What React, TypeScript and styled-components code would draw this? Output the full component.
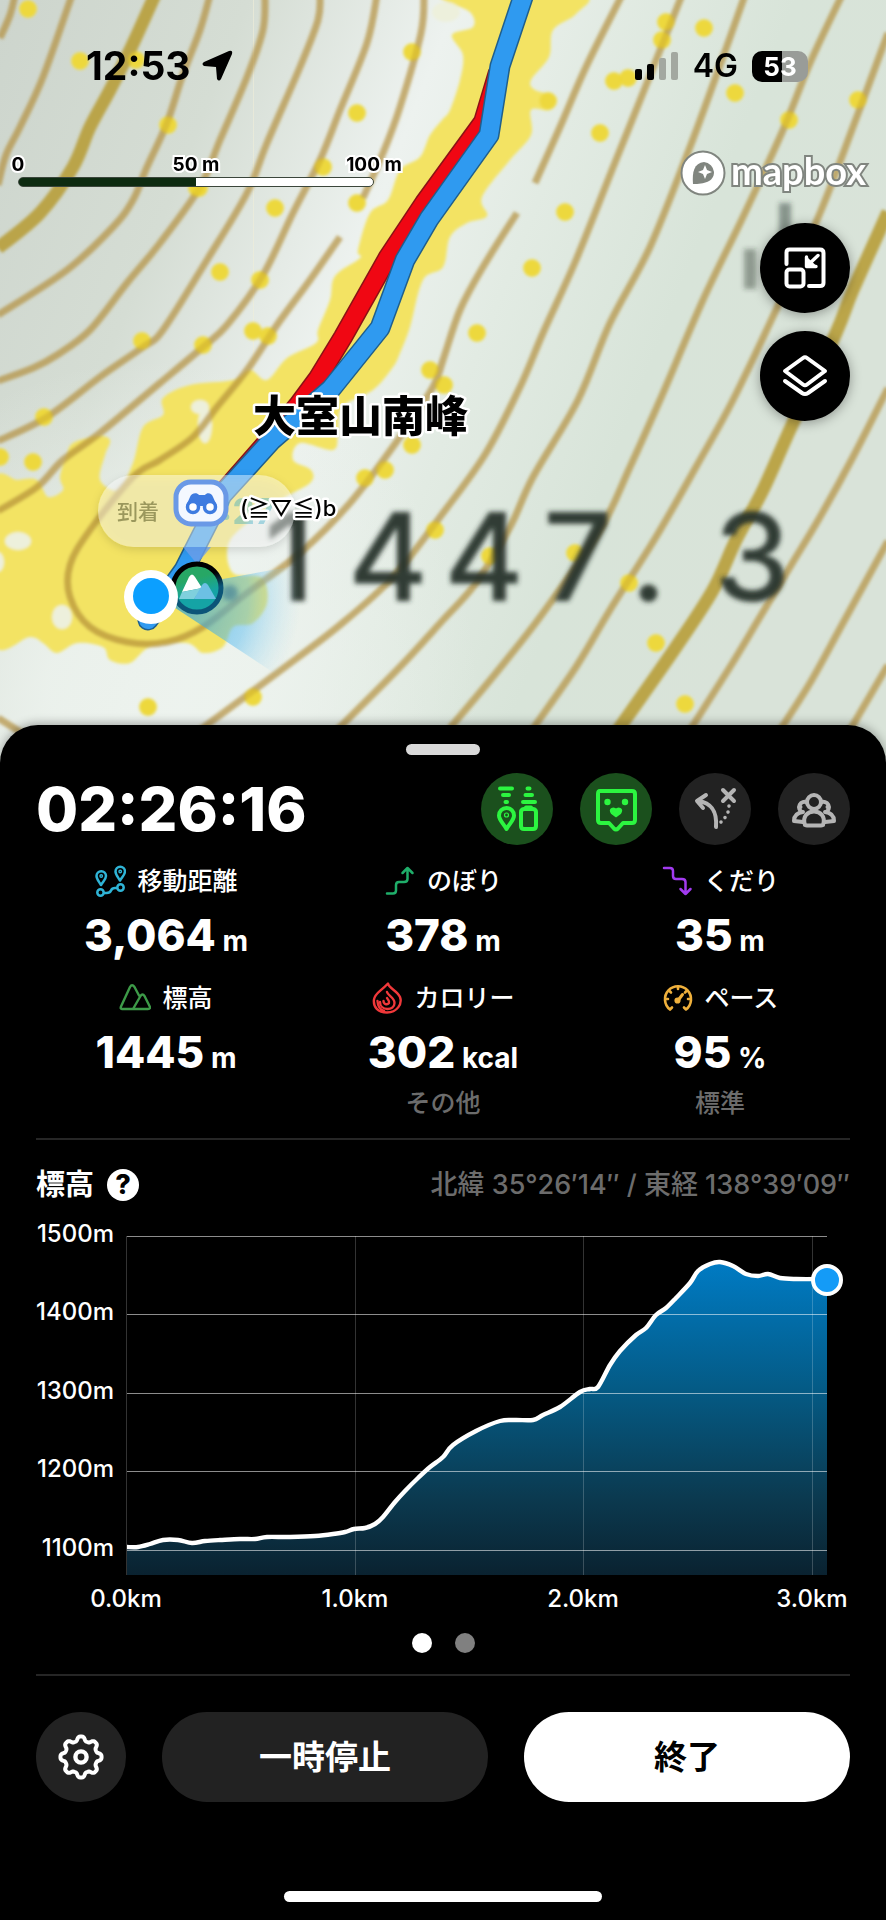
import React from "react";
import styled, { createGlobalStyle } from "styled-components";

const GlobalStyle = createGlobalStyle`
  *, *::before, *::after { box-sizing: border-box; }
  html, body { margin: 0; padding: 0; background: #000; }
  body { font-family: Inter, "Noto Sans CJK JP", sans-serif; color: #fff; }
  button { font: inherit; color: inherit; border: 0; padding: 0; cursor: pointer; }
  dl, dt, dd, h2, p { margin: 0; font: inherit; }
`;

/* ---------- page ---------- */

const Screen = styled.main`
  min-height: 100vh;
  display: flex;
  flex-direction: column;
`;

const MapArea = styled.section`
  position: relative;
  height: 785px;
  margin-bottom: -60px;
  overflow: hidden;
  background: #dfe8df;
  color: #000;
`;

const MapCanvas = styled.svg`
  position: absolute;
  inset: 0;
  width: 100%;
  height: 100%;
  display: block;
`;

const MapOverlay = styled.div`
  position: relative;
`;

const StatusBar = styled.div`
  display: flex;
  justify-content: space-between;
  align-items: center;
  height: 132px;
  padding: 0 78px 0 86px;
`;

const StatusGroup = styled.div<{ $gap: number }>`
  display: flex;
  align-items: center;
  gap: ${(p) => p.$gap}px;
`;

const Clock = styled.span`
  font-size: 39px;
  line-height: 40px;
  font-weight: 700;
`;

const Network = styled.span`
  font-size: 32px;
  line-height: 32px;
  font-weight: 600;
`;

const Battery = styled.span`
  width: 56px;
  height: 31px;
  border-radius: 10px;
  background: linear-gradient(90deg, #000 54%, #999c98 54%);
  color: #fff;
  font-size: 26px;
  line-height: 31px;
  font-weight: 700;
  text-align: center;
`;

const MapTools = styled.div`
  display: flex;
  justify-content: space-between;
  align-items: flex-start;
  padding: 18px 20px 0 18px;
`;

const Scale = styled.div`
  width: 356px;
  padding-top: 4px;
`;

const ScaleLabels = styled.div`
  display: flex;
  justify-content: space-between;
`;

const ScaleLabel = styled.span`
  display: flex;
  justify-content: center;
  width: 0;
  white-space: nowrap;
  font-size: 19px;
  line-height: 22px;
  font-weight: 700;
  -webkit-text-stroke: 4px #fff;
  paint-order: stroke fill;
`;

const ScaleBar = styled.div`
  height: 10px;
  margin-top: 1px;
  border: 1px solid #3b463b;
  border-radius: 5px;
  background: linear-gradient(90deg, #0d2b10 50%, #fff 50%);
`;

const ToolColumn = styled.div`
  display: flex;
  flex-direction: column;
  align-items: flex-end;
  gap: 18px;
`;

const MapboxLogo = styled.a`
  display: flex;
  align-items: center;
  gap: 5px;
  height: 46px;
  margin-bottom: 9px;
  color: #fff;
  text-decoration: none;
`;

const MapboxWord = styled.span`
  font-family: Lato, sans-serif;
  font-size: 38px;
  line-height: 38px;
  padding-bottom: 6px;
  font-weight: 700;
  -webkit-text-stroke: 4px #80857f;
  paint-order: stroke fill;
`;

const MapButton = styled.button`
  width: 90px;
  height: 90px;
  margin-right: 16px;
  border-radius: 50%;
  background: #000;
  box-shadow: 0 2px 12px rgba(0, 0, 0, 0.35);
  color: #fff;
`;

/* ---------- sheet ---------- */

const Sheet = styled.section`
  position: relative;
  flex: 1;
  display: flex;
  flex-direction: column;
  padding: 19px 36px 18px;
  border-radius: 38px 38px 0 0;
  background: #000;
  box-shadow: 0 -2px 10px rgba(0, 0, 0, 0.3);
`;

const Grabber = styled.div`
  align-self: center;
  width: 74px;
  height: 11px;
  border-radius: 6px;
  background: #d9d9d9;
`;

const TimerRow = styled.div`
  display: flex;
  align-items: center;
  justify-content: space-between;
  margin-top: 18px;
`;

const Timer = styled.time`
  font-size: 61px;
  line-height: 72px;
  font-weight: 800;
`;

const Toggles = styled.div`
  display: flex;
  gap: 27px;
`;

const Toggle = styled.button<{ $on?: boolean }>`
  width: 72px;
  height: 72px;
  border-radius: 50%;
  background: ${(p) => (p.$on ? "#1b501d" : "#222")};
  color: ${(p) => (p.$on ? "#2cf540" : "#b5b5b5")};
`;

const Stats = styled.dl`
  display: grid;
  grid-template-columns: repeat(3, 1fr);
  gap: 14px 17px;
  margin-top: 18px;
`;

const Stat = styled.div`
  display: flex;
  flex-direction: column;
  align-items: center;
`;

const StatLabel = styled.dt`
  display: flex;
  align-items: center;
  gap: 11px;
  font-size: 25px;
  line-height: 36px;
  font-weight: 500;
`;

const StatValue = styled.dd`
  margin-top: 11px;
  font-size: 44px;
  line-height: 50px;
  font-weight: 800;
`;

const Unit = styled.span`
  font-size: 28px;
  font-weight: 700;
`;

const StatNote = styled.dd`
  margin-top: 2px;
  font-size: 25px;
  line-height: 36px;
  font-weight: 500;
  color: #6c6c6c;
`;

const Divider = styled.hr`
  width: 100%;
  height: 2px;
  margin: 17px 0 0;
  border: 0;
  background: #262626;
`;

const ElevationHeader = styled.div`
  display: flex;
  align-items: center;
  justify-content: space-between;
  height: 40px;
  margin-top: 25px;
`;

const ElevationTitle = styled.div`
  display: flex;
  align-items: center;
  gap: 13px;
`;

const Title = styled.h2`
  font-size: 29px;
  line-height: 40px;
  font-weight: 700;
`;

const Help = styled.button`
  width: 32px;
  height: 32px;
  border-radius: 50%;
  background: #fff;
  color: #000;
  font-size: 27px;
  line-height: 32px;
  font-weight: 800;
`;

const Coordinates = styled.p`
  font-size: 27px;
  line-height: 40px;
  font-weight: 500;
  color: #6c6c6c;
`;

const Chart = styled.svg`
  display: block;
  width: 100%;
  height: auto;
  overflow: visible;
  margin-top: 13px;
  font-size: 24px;
  font-weight: 500;
`;

const Pager = styled.div`
  display: flex;
  justify-content: center;
  gap: 23px;
  margin: 5px 0 4px;
`;

const PageDot = styled.button<{ $active?: boolean }>`
  width: 20px;
  height: 20px;
  border-radius: 50%;
  background: ${(p) => (p.$active ? "#fff" : "#808080")};
`;

const Actions = styled.div`
  display: flex;
  gap: 36px;
  margin-top: 36px;
`;

const SettingsButton = styled.button`
  flex: none;
  width: 90px;
  height: 90px;
  border-radius: 50%;
  background: #222;
`;

const ActionButton = styled.button<{ $primary?: boolean }>`
  flex: 1;
  height: 90px;
  border-radius: 45px;
  background: ${(p) => (p.$primary ? "#fff" : "#222")};
  color: ${(p) => (p.$primary ? "#000" : "#fff")};
  font-size: 33px;
  line-height: 40px;
  font-weight: 700;
`;

const HomeIndicator = styled.div`
  align-self: center;
  width: 39%;
  height: 11px;
  margin-top: auto;
  border-radius: 6px;
  background: #fff;
`;

const LineIcon = styled.svg`
  display: block;
  fill: none;
  stroke: currentColor;
  stroke-linecap: round;
  stroke-linejoin: round;
`;

/* ---------- map data ---------- */

type Pt = [number, number];

/* Catmull-Rom spline through the points */
function smooth(points: Pt[], close = false): string {
  const n = points.length;
  const at = (i: number): Pt =>
    close ? points[(i + n) % n] : points[Math.max(0, Math.min(n - 1, i))];
  let d = `M${points[0][0]} ${points[0][1]}`;
  const last = close ? n : n - 1;
  for (let i = 0; i < last; i++) {
    const [p0, p1, p2, p3] = [at(i - 1), at(i), at(i + 1), at(i + 2)];
    d += `C${(p1[0] + (p2[0] - p0[0]) / 6).toFixed(1)} ${(p1[1] + (p2[1] - p0[1]) / 6).toFixed(1)} ${(p2[0] - (p3[0] - p1[0]) / 6).toFixed(1)} ${(p2[1] - (p3[1] - p1[1]) / 6).toFixed(1)} ${p2[0]} ${p2[1]}`;
  }
  return close ? d + "Z" : d;
}

const contours: Pt[][] = [
  [[15, -5], [10, 15], [0, 38]],
  [[72, -5], [43, 77], [20, 127], [6, 155], [-2, 185]],
  [[210, -5], [200, 30], [182, 77], [167, 123], [147, 167], [133, 200], [113, 227], [67, 270], [-2, 315]],
  [[265, -5], [263, 30], [247, 77], [220, 140], [200, 187], [160, 243], [127, 283], [90, 330], [57, 355], [33, 368], [-2, 381]],
  [[320, -5], [318, 20], [300, 67], [267, 143], [247, 193], [207, 260], [163, 330], [143, 347], [100, 377], [47, 417], [-2, 441]],
  [[377, -5], [367, 43], [340, 110], [320, 160], [293, 213], [263, 275], [227, 325], [203, 347], [160, 383], [100, 433], [63, 460], [37, 487], [-2, 511]],
  [[424, -5], [421, 33], [400, 107], [383, 153], [363, 198]],
  [[340, 237], [310, 280], [277, 325], [247, 370], [217, 407], [193, 437], [160, 460], [133, 477], [90, 530], [70, 565], [70, 597], [90, 627], [127, 642], [167, 642], [203, 627], [247, 593], [300, 553], [350, 503], [400, 437], [433, 387], [443, 360], [460, 310], [483, 267], [517, 213]],
  [[535, 183], [560, 127], [586, 67], [622, -5]],
  [[682, -5], [643, 93], [616, 160], [576, 260], [543, 333], [520, 387], [486, 453], [443, 513], [393, 577], [340, 625], [277, 673], [200, 730]],
  [[745, -5], [723, 57], [690, 147], [650, 247], [610, 323], [578, 400], [533, 477], [510, 527], [476, 583], [443, 620], [397, 670], [337, 730]],
  [[842, -5], [810, 63], [783, 130], [743, 217], [703, 300], [660, 400], [630, 467], [600, 530], [543, 613], [496, 673], [450, 728]],
  [[888, 33], [853, 127], [820, 213], [776, 310], [733, 400], [696, 467], [656, 537], [610, 610], [576, 667], [532, 730]],
  [[888, 388], [853, 457], [820, 517], [790, 567], [760, 617], [730, 667], [690, 730]],
  [[888, 541], [843, 623], [810, 683], [780, 730]],
  [[888, 665], [850, 730]],
  [[-2, 718], [25, 735]],
];

const indexContours: Pt[][] = [
  [[155, -5], [130, 50], [110, 90], [90, 127], [73, 167], [40, 213], [-2, 248]],
  [[888, 212], [853, 290], [836, 333], [793, 423], [763, 490], [736, 540], [713, 590], [676, 647], [618, 730]],
];

const bareGround: Pt[] = [
  [443, -6], [470, 12], [473, 27], [452, 35], [463, 55], [460, 80], [450, 110], [442, 120], [430, 135], [420, 157], [400, 170], [388, 200],
  [370, 213], [358, 250], [360, 258], [335, 276], [330, 300], [318, 330], [316, 343], [287, 358], [267, 380], [250, 370], [233, 380],
  [190, 385], [163, 398], [163, 415], [143, 427], [133, 463], [118, 490], [100, 480], [105, 455], [110, 440], [98, 436], [73, 443],
  [66, 457], [60, 477], [63, 490], [48, 497], [37, 480], [18, 480], [-8, 487], [-8, 640], [30, 637], [43, 643], [57, 653], [77, 643], [103, 647],
  [110, 660], [130, 663], [150, 647], [187, 643], [203, 653], [223, 647], [233, 627], [253, 623], [267, 603], [262, 578], [233, 573],
  [228, 545], [247, 523], [280, 500], [310, 483], [311, 470], [293, 460], [300, 443], [333, 450], [338, 433], [342, 407], [373, 390],
  [393, 367], [400, 353], [410, 327], [423, 280], [443, 267], [450, 237], [467, 223], [487, 216], [482, 197], [510, 160], [531, 135],
  [531, 110], [550, 110], [556, 97], [535, 90], [531, 80], [549, 57], [553, 30], [576, 14], [580, -6],
];

const clearings: [number, number, number, number][] = [
  [18, 541, 13, 9], [62, 617, 10, 12], [205, 425, 7, 18], [200, 407, 9, 7], [-2, 562, 6, 10], [446, 12, 14, 10],
];

const scrub: Pt[] = [
  [28, 9], [80, 61], [168, 125], [199, 188], [412, 52], [357, 113], [323, 167], [357, 203], [275, 208], [220, 272], [260, 280],
  [142, 341], [203, 345], [253, 331], [268, 336], [44, 417], [666, 22], [662, 40], [704, 28], [614, 81], [628, 78], [735, 93],
  [600, 133], [789, 120], [858, 100], [548, 101], [565, 212], [532, 268], [477, 333], [430, 370], [444, 385], [490, 556], [575, 553],
  [629, 583], [656, 643], [685, 704], [148, 707], [253, 697], [365, 478], [385, 470], [412, 445], [435, 530], [33, 462], [0, 457],
  [197, 188], [340, 352], [136, 60],
];

const plannedRoute = "M498 72L483 122L424 203L388 257L343 337L318 378L298 405L266 443L216 500";
const walkedRoute = "M524-6L500 66L489 135L429 219L405 260L380 328L331 389L272 440L222 495L184 570L148 620";

function MapDrawing() {
  return (
    <MapCanvas viewBox="0 0 886 785" preserveAspectRatio="xMidYMin slice" role="img" aria-label="大室山南峰の地図">
      <defs>
        <linearGradient id="ground" x1="0" y1="0" x2="1" y2="0.35">
          <stop offset="0" stopColor="#cdd5cd" />
          <stop offset="0.25" stopColor="#d5ddd4" />
          <stop offset="0.46" stopColor="#edf2ef" />
          <stop offset="0.62" stopColor="#e2ebe3" />
          <stop offset="0.8" stopColor="#d8e4d9" />
          <stop offset="1" stopColor="#d9e3d9" />
        </linearGradient>
        <radialGradient id="valley" gradientUnits="userSpaceOnUse" cx="150" cy="690" r="330">
          <stop offset="0.3" stopColor="#edf3ee" stopOpacity="0.85" />
          <stop offset="1" stopColor="#edf3ee" stopOpacity="0" />
        </radialGradient>
        <radialGradient id="heading" gradientUnits="userSpaceOnUse" cx="151" cy="597" r="150">
          <stop offset="0.2" stopColor="#1b9be0" stopOpacity="0.65" />
          <stop offset="0.65" stopColor="#5cbdf0" stopOpacity="0.5" />
          <stop offset="1" stopColor="#a9def5" stopOpacity="0" />
        </radialGradient>
        <linearGradient id="peakFill" x1="0" y1="0" x2="0.3" y2="1">
          <stop offset="0.4" stopColor="#27a765" />
          <stop offset="0.75" stopColor="#15a3a5" />
        </linearGradient>
        <linearGradient id="peakRing" x1="0" y1="0" x2="0.3" y2="1">
          <stop offset="0.4" stopColor="#000" />
          <stop offset="0.7" stopColor="#0b5578" />
        </linearGradient>
        <filter id="soft"><feGaussianBlur stdDeviation="1.6" /></filter>
        <filter id="softer"><feGaussianBlur stdDeviation="2.4" /></filter>
        <filter id="pillShadow" x="-20%" y="-30%" width="140%" height="180%">
          <feDropShadow dx="0" dy="3" stdDeviation="4" floodOpacity="0.3" />
        </filter>
      </defs>

      <rect width="886" height="785" fill="url(#ground)" />
      <rect width="886" height="785" fill="url(#valley)" />
      <rect x="253" width="1" height="375" fill="#f0efd8" opacity="0.6" />

      <g filter="url(#soft)">
        <path d={smooth(bareGround, true)} fill="#f3e364" />
        {clearings.map(([cx, cy, rx, ry], i) => (
          <ellipse key={i} cx={cx} cy={cy} rx={rx} ry={ry} fill="#edf0dc" />
        ))}
        {scrub.map(([cx, cy], i) => (
          <circle key={i} cx={cx} cy={cy} r="9" fill="#eedc50" />
        ))}
        <g fill="none" stroke="#b38d36">
          {contours.map((c, i) => (
            <path key={i} d={smooth(c)} strokeWidth="7" opacity="0.68" />
          ))}
          {indexContours.map((c, i) => (
            <path key={i} d={smooth(c)} strokeWidth="13" stroke="#b99f3d" opacity="0.92" />
          ))}
        </g>
        {scrub.map(([cx, cy], i) => (
          <circle key={i} cx={cx} cy={cy} r="8" fill="#ecd52c" opacity="0.55" />
        ))}
      </g>

      <g filter="url(#softer)" fill="#27332b">
        <rect x="779" y="203" width="12" height="40" opacity="0.45" />
        <rect x="744" y="249" width="12" height="40" opacity="0.4" />
        <circle cx="230" cy="593" r="8" opacity="0.6" />
        <text x="264 348 444 543 630 714" y="601" fontSize="122" fontWeight="500" opacity="0.95">1447.3</text>
      </g>

      <g fill="none" strokeLinejoin="round">
        <path d={plannedRoute} stroke="#8b1216" strokeWidth="20" />
        <path d={plannedRoute} stroke="#f00713" strokeWidth="17" />
        <path d={walkedRoute} stroke="#1f5f8d" strokeWidth="21" strokeLinecap="round" />
        <path d={walkedRoute} stroke="#2f9af0" strokeWidth="18" strokeLinecap="round" />
      </g>

      <path d="M151 592L300 565V690Z" fill="url(#heading)" />

      <text x="253" y="432" fontSize="43" fontWeight="900" fontFamily='"Noto Sans CJK JP", sans-serif' stroke="#fff" strokeWidth="5" strokeLinejoin="round" paintOrder="stroke">
        大室山南峰
      </text>

      <g filter="url(#pillShadow)">
        <rect x="98" y="475" width="197" height="72" rx="36" fill="#fff" fillOpacity="0.42" />
      </g>
      <path d="M183 547H211L197 564Z" fill="#6d9de8" opacity="0.8" />
      <text x="117" y="519" fontSize="21" fontWeight="500" fill="#77763e" opacity="0.7">到着</text>
      <text x="182" y="524" fontSize="36" fontWeight="700" fill="#1a9fc0" opacity="0.35">12:27</text>

      <g transform="translate(174 480)">
        <rect x="2" y="2" width="50" height="42" rx="15" fill="#f4f8ff" stroke="#6a99e6" strokeWidth="5" />
        <path d="M16 17C17 13 23 12 25 15H31C33 12 38 13 39 17L43 26H12Z" fill="#3e7be0" />
        <circle cx="19" cy="27" r="5.5" fill="#fff" stroke="#3e7be0" strokeWidth="3.5" />
        <circle cx="36" cy="27" r="5.5" fill="#fff" stroke="#3e7be0" strokeWidth="3.5" />
      </g>
      <text x="240" y="516" fontSize="22" fontWeight="500" stroke="#fff" strokeWidth="5" strokeLinejoin="round" paintOrder="stroke">
        (≧▽≦)b
      </text>

      <circle cx="197" cy="588" r="24" fill="url(#peakFill)" stroke="url(#peakRing)" strokeWidth="5" />
      <path d="M182 592L189 577Q192 572 195 577L202 588Z" fill="#fff" />
      <path d="M182 592L202 588L194 599H179Z" fill="#7fd0dd" />
      <path d="M194 599L202 585Q205 581 208 585L216 599Z" fill="#6cc0e4" />

      <circle cx="151" cy="597" r="27" fill="#fff" />
      <circle cx="151" cy="596" r="18" fill="#0b9fff" />
    </MapCanvas>
  );
}

/* ---------- icons ---------- */

function gearPath(cx: number, cy: number): string {
  const pts: string[] = [];
  for (let i = 0; i < 160; i++) {
    const a = (i / 160) * Math.PI * 2;
    const r = 18.4 + 2.3 * Math.tanh(1.7 * Math.cos(8 * a));
    pts.push(`${(cx + r * Math.sin(a)).toFixed(2)} ${(cy - r * Math.cos(a)).toFixed(2)}`);
  }
  return `M${pts.join("L")}Z`;
}

const GearIcon = () => (
  <LineIcon width="90" height="90" viewBox="0 0 90 90" strokeWidth="4" aria-hidden>
    <path d={gearPath(45, 45)} />
    <circle cx="45" cy="45" r="5.6" strokeWidth="4.4" />
  </LineIcon>
);

const ShrinkIcon = () => (
  <LineIcon width="90" height="90" viewBox="0 0 90 90" strokeWidth="4" aria-hidden>
    <path d="M26.500 41V29.500Q26.500 26.500 29.500 26.500H60Q63.500 26.500 63.500 30V60Q63.500 63 60 63H49" />
    <rect x="26.500" y="46.500" width="17" height="17" rx="3" />
    <path d="M46.500 33.500V43H56.500Z" fill="currentColor" stroke="none" />
    <path d="M46.500 34V43.500H56M47.500 42.500L58 32.500" strokeWidth="3.4" />
  </LineIcon>
);

const LayersIcon = () => (
  <LineIcon width="90" height="90" viewBox="0 0 90 90" strokeWidth="4" aria-hidden>
    <path d="M43 27Q45 25.500 47 27L65 40L47 53.500Q45 55 43 53.500L25 40Z" />
    <path d="M25 50L42 62Q45 64 48 62L65 50" />
  </LineIcon>
);

const DevicesIcon = () => (
  <LineIcon width="72" height="72" viewBox="0 0 72 72" strokeWidth="4" aria-hidden>
    <path d="M19 15.500H31M22 22H28M24.500 29H26M46.500 15.500H48.500M44.500 22H51M42 29H54" />
    <path d="M25.500 56C22 50 18 47 18 42.500A7.500 7.500 0 0 1 33 42.500C33 47 29 50 25.500 56Z" />
    <circle cx="25.500" cy="42" r="0.6" />
    <path d="M43 36H52Q55 36.500 55 39V53Q55 56 52 56H43Q40 56 40 53V39Q40 36.500 43 36ZM45 34.500H50" />
  </LineIcon>
);

const ChatIcon = () => (
  <LineIcon width="72" height="72" viewBox="0 0 72 72" strokeWidth="4" aria-hidden>
    <path d="M20 18H52Q55 18 55 21V47Q55 50 52 50H43L38 55.500Q36 57.500 34 55.500L29 50H21Q18 50 18 47V21Q18 18 20 18Z" />
    <path d="M32 36Q34 35 36 37Q38 35 40 36Q42 37 40 40L36 43L32 40Q30 37 32 36Z" fill="currentColor" strokeWidth="2.4" />
    <circle cx="27.500" cy="29" r="3.2" fill="currentColor" stroke="none" />
    <circle cx="45" cy="29" r="3.2" fill="currentColor" stroke="none" />
  </LineIcon>
);

const RouteOffIcon = () => (
  <LineIcon width="72" height="72" viewBox="0 0 72 72" strokeWidth="4" aria-hidden>
    <path d="M37 54C38 40 34 30 19 28M27 22L18 28L24 35" />
    <path d="M44 17L55 28M55 17L44 28" />
    <path d="M50 33V33.100M49 39V39.100M46 44.500V44.600M42 49V49.100" strokeWidth="3.600" />
  </LineIcon>
);

const GroupIcon = () => (
  <LineIcon width="72" height="72" viewBox="0 0 72 72" strokeWidth="4" aria-hidden>
    <circle cx="36" cy="29" r="7" />
    <path d="M29 29.500A5 5 0 1 0 24 39M43 29.500A5 5 0 1 1 48 39" />
    <path d="M27 52C24 43 30 38.500 36 38.500C42 38.500 48 43 45 52Q44 52.500 43 52.500H29Q28 52.500 27 52Z" />
    <path d="M25 39Q16 40 16 48L25 49M47 39Q56 40 56 48L47 49" />
    <circle cx="22.500" cy="34" r="2" fill="currentColor" stroke="none" />
    <circle cx="49.500" cy="34" r="2" fill="currentColor" stroke="none" />
  </LineIcon>
);

const DistanceIcon = () => (
  <LineIcon width="32" height="32" viewBox="0 0 32 32" strokeWidth="2.5" color="#2fb4d6" aria-hidden>
    <path d="M7 20C4.500 16 2.500 14 2.500 11A4.700 4.700 0 0 1 12 11C12 14 9.500 16 7 20ZM26 15.500C23.500 11.500 21.500 9.500 21.500 6.500A4.700 4.700 0 0 1 31 6.500C31 9.500 28.500 11.500 26 15.500Z" />
    <circle cx="7.200" cy="11" r="0.700" />
    <circle cx="26.200" cy="6.500" r="0.700" />
    <circle cx="6.500" cy="27.500" r="3.200" />
    <circle cx="26.500" cy="22.500" r="3.200" />
    <path d="M10 28H12.500Q16 28 17 25.500T21 23H23" />
  </LineIcon>
);

const AscentIcon = () => (
  <LineIcon width="32" height="32" viewBox="0 0 32 32" strokeWidth="2.5" color="#1fae6a" aria-hidden>
    <path d="M3 28.500H9Q12 28.500 12 25.500V20Q12 17 15 17H20Q23.500 17 23.500 14V3M18.500 8L23.500 3L28.500 8" />
  </LineIcon>
);

const DescentIcon = () => (
  <LineIcon width="32" height="32" viewBox="0 0 32 32" strokeWidth="2.5" color="#a23bf0" aria-hidden>
    <path d="M3 3H9Q12 3 12 6V11Q12 14 15 14H21Q24.500 14 24.500 17V29M19.500 24L24.500 29L29.500 24" />
  </LineIcon>
);

const AltitudeIcon = () => (
  <LineIcon width="32" height="32" viewBox="0 0 32 32" strokeWidth="2.4" color="#3d9a48" aria-hidden>
    <path d="M3 27Q1 27 2 24.500L11 5Q13 1.500 15.500 5L20 13.500M3 27H29Q32 27 30.500 24L25.500 14Q23.500 11 21.500 14L14 27" />
  </LineIcon>
);

const CalorieIcon = () => (
  <LineIcon width="32" height="32" viewBox="0 0 32 32" strokeWidth="2.4" color="#f0383a" aria-hidden>
    <path d="M17 1.500C17.500 6 26 8.500 29 15C31.500 22 26 30.500 16 30.500C7 30.500 2 25 3 17.500C4 11 9 10 17 1.500Z" />
    <path d="M16 10C17 14 23.500 15 23.500 21C23.500 25 20 27 16.500 27C12 27 9 24 9 20M12.500 19C12.500 22 16 23.500 18 21C19 19 17 18 16 16" />
    <path d="M6.500 19Q7 27 13 29" />
  </LineIcon>
);

const PaceIcon = () => (
  <LineIcon width="32" height="32" viewBox="0 0 32 32" strokeWidth="2.6" color="#efb03c" aria-hidden>
    <path d="M8 27.500A13 13 0 1 1 24 27.500L22 25.500M8 27.500L10 25.500" />
    <path d="M16 4.500V7M7.500 9L9 10.500M24.500 9L23 10.500M3.500 17H6M28.500 17H26" />
    <path d="M16 18.500L20.500 12.500" strokeWidth="3" />
    <circle cx="15.500" cy="18.500" r="1.800" fill="currentColor" />
  </LineIcon>
);

/* ---------- elevation chart ---------- */

const profile: Pt[] = [
  [91, 329], [102, 329], [114, 326], [127, 322], [142, 322], [156, 325], [169, 323], [184, 322], [204, 321], [219, 321], [231, 319],
  [254, 319], [279, 318], [297, 316], [309, 314], [318, 311], [329, 310], [339, 306], [347, 299], [359, 284], [369, 273], [382, 260],
  [394, 249], [407, 239], [417, 227], [440, 213], [464, 203], [479, 202], [497, 202], [507, 197], [524, 189], [544, 174], [554, 171],
  [562, 169], [574, 147], [584, 133], [600, 117], [610, 110], [620, 97], [630, 90], [640, 80], [654, 65], [662, 53], [674, 46],
  [684, 44], [697, 48], [710, 56], [722, 58], [732, 56], [744, 60], [760, 61], [791, 61],
];

const elevations = [1500, 1400, 1300, 1200, 1100];
const distances = ["0.0km", "1.0km", "2.0km", "3.0km"];

function ElevationChart() {
  const line = smooth(profile);
  return (
    <Chart viewBox="0 0 814 410" role="img" aria-label="標高グラフ">
      <defs>
        <linearGradient id="area" gradientUnits="userSpaceOnUse" x1="0" y1="44" x2="0" y2="357">
          <stop offset="0" stopColor="#007bc4" />
          <stop offset="0.4" stopColor="#045b86" />
          <stop offset="0.75" stopColor="#0b3a50" />
          <stop offset="1" stopColor="#0a2230" />
        </linearGradient>
      </defs>
      <path d={`${line}V357H91Z`} fill="url(#area)" />
      {elevations.map((m, i) => (
        <g key={m}>
          <rect x="91" y={18 + Math.round(i * 78.4)} width="700" height="1" fill="#fff" opacity="0.55" />
          <text x="78" y={24 + Math.round(i * 78.4)} textAnchor="end" fill="#fff">{m}m</text>
        </g>
      ))}
      {distances.map((label, i) => (
        <g key={label}>
          <rect x={90 + Math.round(i * 228.5)} y="18" width="1" height="339" fill="#fff" opacity="0.2" />
          <text x={90 + Math.round(i * 228.5)} y="389" textAnchor="middle" fill="#fff">{label}</text>
        </g>
      ))}
      <path d={line} fill="none" stroke="#fff" strokeWidth="4.400" strokeLinejoin="round" />
      <circle cx="791" cy="62" r="14" fill="#149bf7" stroke="#fff" strokeWidth="4" />
    </Chart>
  );
}

/* ---------- screen ---------- */

const stats = [
  { label: "移動距離", value: "3,064", unit: "m", Icon: DistanceIcon },
  { label: "のぼり", value: "378", unit: "m", Icon: AscentIcon },
  { label: "くだり", value: "35", unit: "m", Icon: DescentIcon },
  { label: "標高", value: "1445", unit: "m", Icon: AltitudeIcon },
  { label: "カロリー", value: "302", unit: "kcal", note: "その他", Icon: CalorieIcon },
  { label: "ペース", value: "95", unit: "%", note: "標準", Icon: PaceIcon },
];

export default function App() {
  return (
    <Screen>
      <GlobalStyle />
      <MapArea>
        <MapDrawing />
        <MapOverlay>
          <StatusBar>
            <StatusGroup $gap={10}>
              <Clock>12:53</Clock>
              <svg width="32" height="32" viewBox="0 0 32 32" aria-hidden>
                <path d="M28 1Q32 0 31 4L20 29Q18 32 16 29L15 17L3 16Q0 14 3 12Z" />
              </svg>
            </StatusGroup>
            <StatusGroup $gap={14}>
              <svg width="44" height="28" viewBox="0 0 44 28" aria-hidden>
                <rect x="0" y="17" width="7" height="11" rx="2" />
                <rect x="12" y="12" width="7" height="16" rx="2" />
                <rect x="24" y="6" width="7" height="22" rx="2" fill="#a3a8a0" />
                <rect x="36" y="0" width="7" height="28" rx="2" fill="#a3a8a0" />
              </svg>
              <Network>4G</Network>
              <Battery>53</Battery>
            </StatusGroup>
          </StatusBar>
          <MapTools>
            <Scale>
              <ScaleLabels>
                <ScaleLabel>0</ScaleLabel>
                <ScaleLabel>50 m</ScaleLabel>
                <ScaleLabel>100 m</ScaleLabel>
              </ScaleLabels>
              <ScaleBar />
            </Scale>
            <ToolColumn>
              <MapboxLogo href="#mapbox">
                <svg width="46" height="46" viewBox="0 0 46 46" aria-hidden>
                  <circle cx="23" cy="23" r="21.5" fill="#fff" stroke="#80857f" strokeWidth="2" />
                  <path d="M13 34C12 22 14 13 24 12A11 11 0 0 1 34 22C34 32 24 34 13 34Z" fill="#80857f" />
                  <path d="M25 15L27 20L32 22L27 24L25 29L23 24L18 22L23 20Z" fill="#fff" />
                </svg>
                <MapboxWord>mapbox</MapboxWord>
              </MapboxLogo>
              <MapButton aria-label="地図を縮小"><ShrinkIcon /></MapButton>
              <MapButton aria-label="レイヤー"><LayersIcon /></MapButton>
            </ToolColumn>
          </MapTools>
        </MapOverlay>
      </MapArea>

      <Sheet>
        <Grabber />
        <TimerRow>
          <Timer>02:26:16</Timer>
          <Toggles>
            <Toggle $on aria-label="位置共有"><DevicesIcon /></Toggle>
            <Toggle $on aria-label="メッセージ"><ChatIcon /></Toggle>
            <Toggle aria-label="ルート逸脱"><RouteOffIcon /></Toggle>
            <Toggle aria-label="グループ"><GroupIcon /></Toggle>
          </Toggles>
        </TimerRow>

        <Stats>
          {stats.map(({ label, value, unit, note, Icon }) => (
            <Stat key={label}>
              <StatLabel><Icon />{label}</StatLabel>
              <StatValue>{value}<Unit> {unit}</Unit></StatValue>
              {note && <StatNote>{note}</StatNote>}
            </Stat>
          ))}
        </Stats>

        <Divider />

        <ElevationHeader>
          <ElevationTitle>
            <Title>標高</Title>
            <Help aria-label="標高について">?</Help>
          </ElevationTitle>
          <Coordinates>北緯 35°26′14″ / 東経 138°39′09″</Coordinates>
        </ElevationHeader>

        <ElevationChart />

        <Pager>
          <PageDot $active aria-label="1ページ" />
          <PageDot aria-label="2ページ" />
        </Pager>

        <Divider />

        <Actions>
          <SettingsButton aria-label="設定"><GearIcon /></SettingsButton>
          <ActionButton>一時停止</ActionButton>
          <ActionButton $primary>終了</ActionButton>
        </Actions>

        <HomeIndicator />
      </Sheet>
    </Screen>
  );
}
